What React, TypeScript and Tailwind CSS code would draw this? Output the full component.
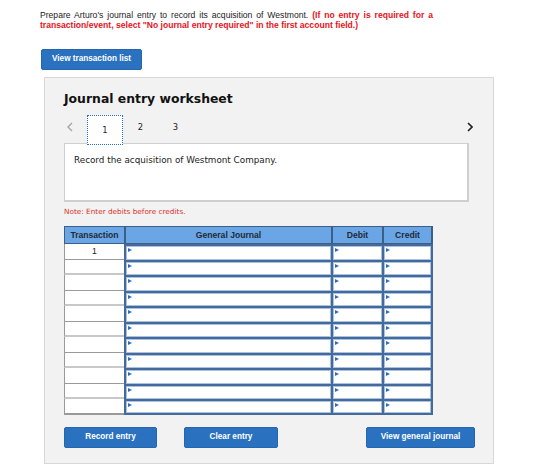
import React from "react";

const ROWS = 11;

function Marker() {
  return (
    <span className="absolute left-[1px] top-[1px] w-0 h-0 border-l-[4px] border-l-[#2b6cc4] border-y-[2px] border-y-transparent" />
  );
}

function InputCell({ last }: { last?: boolean }) {
  return (
    <div
      className={`relative h-full border-l-2 border-t-2 border-[#44699a] bg-white ${last ? "border-r-2" : ""}`}
    >
      <div className="relative h-full border border-[#a9c2e0] bg-white">
        <Marker />
      </div>
    </div>
  );
}

export default function App() {
  const rows = Array.from({ length: ROWS }, (_, i) => i);
  return (
    <div
      className="w-[560px] h-[476px] bg-white overflow-hidden"
      style={{ fontFamily: "'Liberation Sans', Arial, sans-serif" }}
    >
      <div className="pl-[40px] pt-[10px]">
        <p className="w-[393px] text-[8.6px] leading-[10px] text-[#222] text-justify">
          Prepare Arturo's journal entry to record its acquisition of Westmont.{" "}
          <span className="font-bold text-[#e8121b]">
            (If no entry is required for a transaction/event, select "No journal entry required" in the first account field.)
          </span>
        </p>

        <button className="mt-[19px] ml-[1px] w-[101px] h-[21px] rounded-[2px] bg-[#2a72c0] text-white text-[8.2px] font-bold border border-[#2566b0]">
          View transaction list
        </button>

        <div className="mt-[7px] ml-[4px] w-[450px] h-[387px] bg-[#f2f2f2] border border-[#d8d8d8] pl-[19px] pt-[13px]">
          <h2
            className="text-[12.4px] leading-[16px] font-bold text-[#111]"
            style={{ fontFamily: "'DejaVu Sans', Verdana, sans-serif" }}
          >
            Journal entry worksheet
          </h2>

          <div
            className="mt-[8px] w-[412px] h-[28px] flex items-start text-[8.4px] text-[#222]"
            style={{ fontFamily: "'DejaVu Sans', Verdana, sans-serif" }}
          >
            <span className="w-[23px] h-[24px] flex items-center justify-start pl-[3px]">
              <svg width="6" height="10" viewBox="0 0 6 10">
                <path d="M5 1 L1 5 L5 9" fill="none" stroke="#a3a3a3" strokeWidth="1.3" />
              </svg>
            </span>
            <span className="relative z-10 w-[36px] h-[30px] bg-white border border-dotted border-[#2b6cc4] flex items-center justify-center">
              1
            </span>
            <span className="w-[35px] h-[24px] flex items-center justify-center">2</span>
            <span className="w-[35px] h-[24px] flex items-center justify-center">3</span>
            <span className="ml-auto w-[12px] h-[24px] flex items-center justify-center">
              <svg width="6" height="10" viewBox="0 0 6 10">
                <path d="M1 1 L5 5 L1 9" fill="none" stroke="#222" strokeWidth="1.6" />
              </svg>
            </span>
          </div>

          <div
            className="w-[405px] h-[59px] bg-white border border-[#cfcfcf] border-r-2 border-b-2 pl-[9px] pt-[10px] text-[8.8px] leading-[12px] text-[#222]"
            style={{ fontFamily: "'DejaVu Sans', Verdana, sans-serif" }}
          >
            Record the acquisition of Westmont Company.
          </div>

          <p
            className="mt-[5px] text-[7.3px] leading-[10px] text-[#d9332d]"
            style={{ fontFamily: "'DejaVu Sans', Verdana, sans-serif" }}
          >
            Note: Enter debits before credits.
          </p>

          <div className="mt-[9px] w-[369px] grid grid-cols-[60px_207px_51px_51px] text-[8.6px]">
            {/* header */}
            <div className="h-[18px] bg-[#6aa6e6] border border-[#3d5f86] border-r-0 flex items-center justify-center font-bold text-[#1f2a36]">
              Transaction
            </div>
            <div className="h-[18px] bg-[#6aa6e6] border-y border-l-2 border-[#3d5f86] flex items-center justify-center font-bold text-[#1f2a36]">
              General Journal
            </div>
            <div className="h-[18px] bg-[#6aa6e6] border-y border-l-2 border-[#3d5f86] flex items-center justify-center font-bold text-[#1f2a36]">
              Debit
            </div>
            <div className="h-[18px] bg-[#6aa6e6] border-y border-x-2 border-[#3d5f86] flex items-center justify-center font-bold text-[#1f2a36]">
              Credit
            </div>

            {rows.map((i) => (
              <React.Fragment key={i}>
                <div
                  className={`h-[15.5px] bg-white border-l border-[#9a9a9a] flex items-center justify-center text-[#222] ${
                    i === ROWS - 1 ? "border-b-2" : i % 2 === 0 ? "border-b" : "border-b-2 border-b-[#c8c8c8]"
                  }`}
                >
                  {i === 0 ? "1" : ""}
                </div>
                <div className={`h-[15.5px] ${i === ROWS - 1 ? "border-b-2 border-[#44699a]" : ""}`}>
                  <InputCell />
                </div>
                <div className={`h-[15.5px] ${i === ROWS - 1 ? "border-b-2 border-[#44699a]" : ""}`}>
                  <InputCell />
                </div>
                <div className={`h-[15.5px] ${i === ROWS - 1 ? "border-b-2 border-[#44699a]" : ""}`}>
                  <InputCell last />
                </div>
              </React.Fragment>
            ))}
          </div>

          <div className="mt-[12px] flex items-center text-[8.2px] font-bold text-white">
            <button className="w-[93px] h-[21px] rounded-[2px] bg-[#2a72c0] border border-[#2566b0]">
              Record entry
            </button>
            <button className="ml-[27px] w-[94px] h-[21px] rounded-[2px] bg-[#2a72c0] border border-[#2566b0]">
              Clear entry
            </button>
            <button className="ml-[88px] w-[109px] h-[21px] rounded-[2px] bg-[#2a72c0] border border-[#2566b0]">
              View general journal
            </button>
          </div>
        </div>
      </div>
    </div>
  );
}
